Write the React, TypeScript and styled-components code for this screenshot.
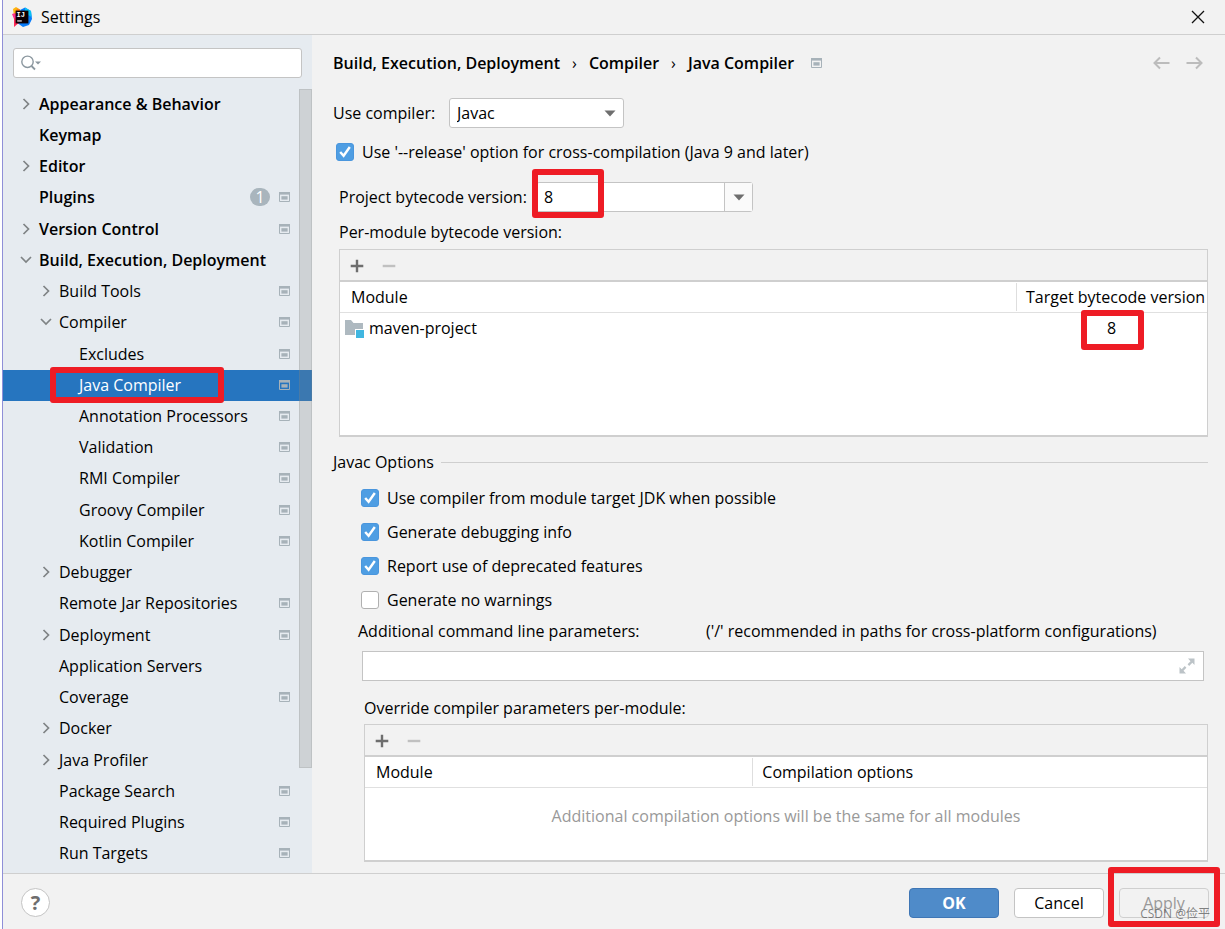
import React from "react";
import styled, { createGlobalStyle, css } from "styled-components";

const GlobalStyle = createGlobalStyle`
  *, *::before, *::after { box-sizing: border-box; }
  body {
    margin: 0;
    background: #f2f2f2;
    color: #000;
    font: 16px/24px "Open Sans", "Noto Sans CJK SC", sans-serif;
  }
  input, select, button { font: inherit; color: inherit; margin: 0; }
`;

const BORDER = "#cfcfcf";
const RED = "#ee1c25";

/* Red pen rectangle laid over the element that it marks */
const marked = css<{ $inset: string }>`
  position: relative;
  &::after {
    content: "";
    position: absolute;
    inset: ${(p) => p.$inset};
    border: 6px solid ${RED};
    border-radius: 3px;
    pointer-events: none;
    z-index: 2;
  }
`;

const Dialog = styled.div`
  display: grid;
  grid-template-rows: 35px 1fr 56px;
  min-height: 100vh;
  border-left: 1px solid #8f8fd8;
  margin-left: 2px;
  box-shadow: -2px 0 0 #fff;
`;

const TitleBar = styled.header`
  display: flex;
  align-items: center;
  gap: 9px;
  padding: 0 20px 0 9px;
  border-bottom: 1px solid ${BORDER};
`;

const Title = styled.h1`
  flex: 1;
  margin: 0;
  font-size: 16px;
  font-weight: 400;
`;

const IconButton = styled.button`
  display: flex;
  align-items: center;
  justify-content: center;
  padding: 0;
  border: 0;
  background: none;
`;

const Body = styled.div`
  display: grid;
  grid-template-columns: 309px minmax(0, 1fr);
`;

const Sidebar = styled.aside`
  display: flex;
  flex-direction: column;
  gap: 11px;
  padding: 13px 0 3px;
  background: #e6ebf0;
`;

const SearchBox = styled.label`
  display: flex;
  align-items: center;
  gap: 4px;
  height: 30px;
  margin: 0 10px;
  padding: 0 7px;
  border: 1px solid #c4c4c4;
  border-radius: 3px;
  background: #fff;
`;

const BareInput = styled.input`
  flex: 1;
  min-width: 0;
  padding: 0;
  border: 0;
  outline: 0;
  background: none;
`;

const Tree = styled.ul`
  position: relative;
  flex: 1;
  display: grid;
  grid-auto-rows: 1fr;
  margin: 0;
  padding: 0;
  list-style: none;
`;

const TreeRow = styled.li<{ $level: number; $selected?: boolean }>`
  display: flex;
  align-items: center;
  padding: 0 22px 2px ${(p) => 16 + p.$level * 20}px;
  font-weight: ${(p) => (p.$level === 0 ? 600 : 400)};
  ${(p) => p.$selected && css`
    background: #2675bf;
    color: #fff;
  `}
`;

const TreeToggle = styled.span`
  display: flex;
  align-items: center;
  justify-content: center;
  width: 14px;
  margin-right: 6px;
`;

const TreeLabel = styled.span<{ $inset?: string }>`
  ${(p) => p.$inset && marked}
`;

const TreeEnd = styled.span`
  display: flex;
  align-items: center;
  gap: 9px;
  margin-left: auto;
`;

const CountBadge = styled.span`
  width: 20px;
  height: 18px;
  border-radius: 9px;
  background: #a9b5bd;
  color: #fff;
  font-size: 16px;
  font-weight: 400;
  line-height: 18px;
  text-align: center;
`;

const Scrollbar = styled.li`
  position: absolute;
  top: 0;
  right: 0;
  width: 13px;
  height: 87%;
  border: 1px solid rgba(130, 130, 130, 0.2);
  background: rgba(130, 130, 130, 0.24);
`;

const Main = styled.main`
  display: flex;
  flex-direction: column;
  padding: 16px 17px 11px 21px;
`;

const Breadcrumb = styled.nav`
  display: flex;
  align-items: center;
  gap: 12px;
  font-weight: 600;
`;

const Separator = styled.span`
  font-weight: 400;
`;

const BreadcrumbMark = styled.span`
  display: flex;
  margin-left: 5px;
`;

const BreadcrumbEnd = styled.span`
  display: flex;
  gap: 16px;
  margin-left: auto;
  margin-right: 5px;
`;

const Row = styled.div<{ $top: number; $left?: number }>`
  display: flex;
  align-items: center;
  margin-top: ${(p) => p.$top}px;
  padding-left: ${(p) => p.$left ?? 0}px;
`;

const FieldLabel = styled.label<{ $width: number }>`
  width: ${(p) => p.$width}px;
`;

const SelectWrap = styled.div`
  position: relative;
  width: 175px;
`;

const Select = styled.select`
  appearance: none;
  display: block;
  width: 100%;
  height: 30px;
  padding: 0 30px 0 7px;
  border: 1px solid #c4c4c4;
  border-radius: 3px;
  background: #fff;
  outline: 0;
`;

const SelectArrow = styled.span`
  position: absolute;
  top: 12px;
  right: 8px;
  display: flex;
  pointer-events: none;
`;

const CheckLabel = styled.label`
  display: flex;
  align-items: center;
  gap: 8px;
`;

const CheckBoxFrame = styled.span`
  display: grid;
  width: 18px;
  height: 18px;
  svg, input { grid-area: 1 / 1; }
  svg { pointer-events: none; z-index: 1; }
  input:not(:checked) + svg { display: none; }
`;

const CheckInput = styled.input`
  appearance: none;
  width: 18px;
  height: 18px;
  border: 1px solid #b0b0b0;
  border-radius: 3px;
  background: #fff;
  &:checked {
    border-color: #4a96dd;
    background: #4f9ee3;
  }
`;

const ComboBox = styled.div<{ $inset: string }>`
  ${marked}
  display: flex;
  width: 217px;
  height: 30px;
  border: 1px solid #c4c4c4;
  border-radius: 3px;
  background: #fff;
  input { padding-left: 7px; }
`;

const ComboButton = styled(IconButton)`
  width: 28px;
  border-left: 1px solid #c4c4c4;
  background: #fafafa;
`;

const Panel = styled.section<{ $left: number; $top: number; $height: number }>`
  display: flex;
  flex-direction: column;
  min-height: ${(p) => p.$height}px;
  margin-top: ${(p) => p.$top}px;
  margin-left: ${(p) => p.$left}px;
  border: 1px solid ${BORDER};
  border-bottom-width: 2px;
  background: #fff;
`;

const PanelToolbar = styled.div`
  display: flex;
  align-items: center;
  gap: 18px;
  height: 32px;
  padding: 2px 0 0 10px;
  border-bottom: 2px solid ${BORDER};
  background: #f2f2f2;
`;

const Table = styled.table`
  width: 100%;
  table-layout: fixed;
  border-collapse: separate;
  border-spacing: 0;
`;

const HeadCell = styled.th<{ $width?: string }>`
  width: ${(p) => p.$width ?? "auto"};
  height: 31px;
  padding: 0;
  border-bottom: 1px solid #e0e0e0;
  font-weight: 400;
  text-align: left;
  white-space: nowrap;
`;

const HeadText = styled.span<{ $split?: boolean }>`
  display: block;
  padding-left: ${(p) => (p.$split ? 9 : 11)}px;
  border-left: ${(p) => (p.$split ? "1px solid #dedede" : "0")};
  line-height: 28px;
`;

const DataCell = styled.td<{ $center?: boolean }>`
  height: 30px;
  padding: 0 4px;
  text-align: ${(p) => (p.$center ? "center" : "left")};
`;

const ModuleName = styled.span`
  display: flex;
  align-items: center;
  gap: 5px;
`;

const MarkedValue = styled.span<{ $inset: string }>`
  ${marked}
  display: inline-block;
`;

const EmptyNote = styled.p`
  margin: 16px 0 0;
  color: #999;
  text-align: center;
`;

const GroupTitle = styled.h2`
  display: flex;
  align-items: center;
  gap: 7px;
  margin: 13px 0 0;
  font-size: 16px;
  font-weight: 400;
  &::after {
    content: "";
    flex: 1;
    height: 1px;
    background: ${BORDER};
  }
`;

const CheckList = styled.div`
  display: flex;
  flex-direction: column;
  gap: 10px;
  margin: 12px 0 0 28px;
`;

const ExpandField = styled.div`
  display: flex;
  align-items: center;
  height: 30px;
  margin: 8px 4px 0 29px;
  padding: 0 8px;
  border: 1px solid #c4c4c4;
  background: #fff;
`;

const Footer = styled.footer`
  display: flex;
  align-items: center;
  gap: 15px;
  padding: 2px 16px 0 18px;
  border-top: 1px solid ${BORDER};
`;

const HelpButton = styled.button`
  width: 29px;
  height: 29px;
  margin-right: auto;
  padding: 0;
  border: 1px solid #c4c4c4;
  border-radius: 50%;
  background: #fff;
  color: #6e6e6e;
  font-size: 20px;
  font-weight: 700;
  line-height: 27px;
`;

const Button = styled.button<{ $primary?: boolean }>`
  display: block;
  width: 90px;
  height: 30px;
  padding: 0;
  border: 1px solid ${(p) => (p.$primary ? "#3f76b5" : "#c4c4c4")};
  border-radius: 4px;
  background: ${(p) => (p.$primary ? "#4f8bc9" : "#fff")};
  color: ${(p) => (p.$primary ? "#fff" : "#000")};
  font-weight: ${(p) => (p.$primary ? 700 : 400)};
  &:disabled {
    background: #f2f2f2;
    border-color: ${BORDER};
    color: #999;
  }
`;

const ApplyWrap = styled.div<{ $inset: string }>`
  ${marked}
`;

const Watermark = styled.span`
  position: absolute;
  right: -1px;
  bottom: -4px;
  color: rgba(90, 90, 90, 0.75);
  font-size: 12px;
  line-height: 16px;
  white-space: nowrap;
`;

const Logo = () => (
  <svg width="20" height="20" viewBox="0 0 20 20" aria-hidden="true">
    <path d="M1 2 4 0 8 2.5 6 9 2 9Z" fill="#fdb60d" />
    <path d="M0 7 5 5.5 6 13 2 12Z" fill="#ff318c" />
    <path d="M2 11 8 12 9 17 5.5 17 2 20Z" fill="#fe2857" />
    <path d="M5 1.5 8 2.5 7 6 3 7Z" fill="#fc801d" />
    <path d="M8 3 13 0.5 19 4 20 12 17 18 11 20 6 16.5 13 10Z" fill="#087cfa" />
    <path d="M13 0.5 19 4 19.5 10 13 6Z" fill="#07c3f2" />
    <rect x="3.6" y="3.6" width="12.8" height="12.8" fill="#0a0005" />
    <text x="4.6" y="10" fill="#fff" fontSize="7" fontWeight="700" fontFamily="Liberation Mono, monospace">IJ</text>
    <rect x="5.2" y="13.4" width="4.6" height="1.1" fill="#fff" />
  </svg>
);

const CloseIcon = () => (
  <svg width="14" height="14" viewBox="0 0 14 14" stroke="#111" strokeWidth="1.3" aria-hidden="true">
    <path d="M1 1 13 13M13 1 1 13" />
  </svg>
);

const SearchIcon = () => (
  <svg width="20" height="16" viewBox="0 0 20 16" fill="none" aria-hidden="true">
    <circle cx="6.5" cy="6.8" r="5.7" stroke="#8b979f" strokeWidth="1.4" />
    <path d="M10.5 11 14 14.5" stroke="#8b979f" strokeWidth="1.8" />
    <path d="M14 6.4H20L17 9.6Z" fill="#8b979f" />
  </svg>
);

const Chevron = ({ open }: { open: boolean }) => (
  <svg width="12" height="12" viewBox="0 0 12 12" fill="none" stroke="#7f8385" strokeWidth="1.7" aria-hidden="true">
    <path d={open ? "M1 3 6 8 11 3" : "M3.5 1 8.5 6 3.5 11"} />
  </svg>
);

const ProjectIcon = () => (
  <svg width="11" height="10" viewBox="0 0 11 10" aria-hidden="true">
    <path d="M0.5 1V9.5H10.5V1" fill="none" stroke="#a7b2b9" />
    <rect width="11" height="2.6" fill="#a7b2b9" />
    <rect x="2.4" y="4.2" width="6.2" height="3.4" fill="#a7b2b9" />
  </svg>
);

const ArrowIcon = ({ right }: { right?: boolean }) => (
  <svg width="17" height="14" viewBox="0 0 17 14" fill="none" stroke="#bcbcbc" strokeWidth="2" aria-hidden="true">
    <path d={right ? "M0.5 7H15.5M10 1.5 15.5 7 10 12.5" : "M16.5 7H1.5M7 1.5 1.5 7 7 12.5"} />
  </svg>
);

const DownTriangle = () => (
  <svg width="12" height="7" viewBox="0 0 12 7" aria-hidden="true">
    <path d="M0.5 0.5H11.5L6 6.5Z" fill="#6e6e6e" />
  </svg>
);

const CheckMark = () => (
  <svg width="18" height="18" viewBox="0 0 18 18" fill="none" stroke="#fff" strokeWidth="2.4" aria-hidden="true">
    <path d="M4.2 9 7.6 12.8 13.8 4" />
  </svg>
);

const PlusIcon = () => (
  <svg width="14" height="14" viewBox="0 0 14 14" stroke="#6e6e6e" strokeWidth="2.4" aria-hidden="true">
    <path d="M7 0.7V13.3M0.7 7H13.3" />
  </svg>
);

const MinusIcon = () => (
  <svg width="14" height="14" viewBox="0 0 14 14" stroke="#c0c0c0" strokeWidth="2.4" aria-hidden="true">
    <path d="M0.7 7H13.3" />
  </svg>
);

const ModuleIcon = () => (
  <svg width="20" height="19" viewBox="0 0 20 19" aria-hidden="true">
    <path d="M1 1H7L9.5 4H19V10H11V16H1Z" fill="#aeb9c0" />
    <rect x="12" y="11" width="8" height="8" fill="#40b6e0" />
  </svg>
);

const ExpandIcon = () => (
  <svg width="16" height="16" viewBox="0 0 16 16" fill="#bcc3c7" aria-hidden="true">
    <path d="M9 0.5H15.5V7L13.3 4.8 10.2 7.9 8.6 6.3 11.5 3.2Z" />
    <path d="M7 15.5H0.5V9L2.7 11.2 5.8 8.1 7.4 9.7 4.5 12.8Z" />
  </svg>
);

type Item = {
  label: string;
  level: number;
  open?: boolean;
  project?: boolean;
  count?: number;
  selected?: boolean;
};

const items: Item[] = [
  { label: "Appearance & Behavior", level: 0, open: false },
  { label: "Keymap", level: 0 },
  { label: "Editor", level: 0, open: false },
  { label: "Plugins", level: 0, project: true, count: 1 },
  { label: "Version Control", level: 0, open: false, project: true },
  { label: "Build, Execution, Deployment", level: 0, open: true },
  { label: "Build Tools", level: 1, open: false, project: true },
  { label: "Compiler", level: 1, open: true, project: true },
  { label: "Excludes", level: 2, project: true },
  { label: "Java Compiler", level: 2, project: true, selected: true },
  { label: "Annotation Processors", level: 2, project: true },
  { label: "Validation", level: 2, project: true },
  { label: "RMI Compiler", level: 2, project: true },
  { label: "Groovy Compiler", level: 2, project: true },
  { label: "Kotlin Compiler", level: 2, project: true },
  { label: "Debugger", level: 1, open: false },
  { label: "Remote Jar Repositories", level: 1, project: true },
  { label: "Deployment", level: 1, open: false, project: true },
  { label: "Application Servers", level: 1 },
  { label: "Coverage", level: 1, project: true },
  { label: "Docker", level: 1, open: false },
  { label: "Java Profiler", level: 1, open: false },
  { label: "Package Search", level: 1, project: true },
  { label: "Required Plugins", level: 1, project: true },
  { label: "Run Targets", level: 1, project: true },
];

const Check = ({ label, checked }: { label: string; checked: boolean }) => (
  <CheckLabel>
    <CheckBoxFrame>
      <CheckInput type="checkbox" defaultChecked={checked} />
      <CheckMark />
    </CheckBoxFrame>
    {label}
  </CheckLabel>
);

const EditToolbar = () => (
  <PanelToolbar>
    <IconButton aria-label="Add"><PlusIcon /></IconButton>
    <IconButton aria-label="Remove" disabled><MinusIcon /></IconButton>
  </PanelToolbar>
);

export default function App() {
  return (
    <>
      <GlobalStyle />
      <Dialog>
        <TitleBar>
          <Logo />
          <Title>Settings</Title>
          <IconButton aria-label="Close"><CloseIcon /></IconButton>
        </TitleBar>
        <Body>
          <Sidebar>
            <SearchBox>
              <SearchIcon />
              <BareInput type="text" aria-label="Search settings" />
            </SearchBox>
            <Tree>
              {items.map((item) => (
                <TreeRow key={item.label} $level={item.level} $selected={item.selected}>
                  <TreeToggle>
                    {item.open !== undefined && <Chevron open={item.open} />}
                  </TreeToggle>
                  <TreeLabel $inset={item.selected ? "-6px -43px -6px -29px" : undefined}>
                    {item.label}
                  </TreeLabel>
                  <TreeEnd>
                    {item.count && <CountBadge>{item.count}</CountBadge>}
                    {item.project && <ProjectIcon />}
                  </TreeEnd>
                </TreeRow>
              ))}
              <Scrollbar aria-hidden="true" />
            </Tree>
          </Sidebar>
          <Main>
            <Breadcrumb aria-label="Breadcrumb">
              <span>Build, Execution, Deployment</span>
              <Separator>›</Separator>
              <span>Compiler</span>
              <Separator>›</Separator>
              <span>Java Compiler</span>
              <BreadcrumbMark><ProjectIcon /></BreadcrumbMark>
              <BreadcrumbEnd>
                <IconButton aria-label="Back" disabled><ArrowIcon /></IconButton>
                <IconButton aria-label="Forward" disabled><ArrowIcon right /></IconButton>
              </BreadcrumbEnd>
            </Breadcrumb>

            <Row $top={23}>
              <FieldLabel $width={116} htmlFor="compiler">Use compiler:</FieldLabel>
              <SelectWrap>
                <Select id="compiler" defaultValue="Javac">
                  <option>Javac</option>
                  <option>Eclipse</option>
                </Select>
                <SelectArrow><DownTriangle /></SelectArrow>
              </SelectWrap>
            </Row>
            <Row $top={12} $left={3}>
              <Check label="Use '--release' option for cross-compilation (Java 9 and later)" checked />
            </Row>
            <Row $top={18} $left={6}>
              <FieldLabel $width={197} htmlFor="bytecode">Project bytecode version:</FieldLabel>
              <ComboBox $inset="-14px 148px -7px -5px">
                <BareInput id="bytecode" type="text" defaultValue="8" />
                <ComboButton aria-label="Show versions"><DownTriangle /></ComboButton>
              </ComboBox>
            </Row>
            <Row $top={8} $left={6}>Per-module bytecode version:</Row>
            <Panel $left={6} $top={5} $height={188}>
              <EditToolbar />
              <Table>
                <thead>
                  <tr>
                    <HeadCell><HeadText>Module</HeadText></HeadCell>
                    <HeadCell $width="191px"><HeadText $split>Target bytecode version</HeadText></HeadCell>
                  </tr>
                </thead>
                <tbody>
                  <tr>
                    <DataCell><ModuleName><ModuleIcon />maven-project</ModuleName></DataCell>
                    <DataCell $center><MarkedValue $inset="-6px -28px -10px -26px">8</MarkedValue></DataCell>
                  </tr>
                </tbody>
              </Table>
            </Panel>

            <GroupTitle>Javac Options</GroupTitle>
            <CheckList>
              <Check label="Use compiler from module target JDK when possible" checked />
              <Check label="Generate debugging info" checked />
              <Check label="Report use of deprecated features" checked />
              <Check label="Generate no warnings" checked={false} />
            </CheckList>
            <Row $top={7} $left={25}>
              <FieldLabel $width={348} htmlFor="params">Additional command line parameters:</FieldLabel>
              <span>('/' recommended in paths for cross-platform configurations)</span>
            </Row>
            <ExpandField>
              <BareInput id="params" type="text" />
              <IconButton aria-label="Expand"><ExpandIcon /></IconButton>
            </ExpandField>
            <Row $top={15} $left={31}>Override compiler parameters per-module:</Row>
            <Panel $left={31} $top={4} $height={138}>
              <EditToolbar />
              <Table>
                <thead>
                  <tr>
                    <HeadCell $width="46%"><HeadText>Module</HeadText></HeadCell>
                    <HeadCell><HeadText $split>Compilation options</HeadText></HeadCell>
                  </tr>
                </thead>
              </Table>
              <EmptyNote>Additional compilation options will be the same for all modules</EmptyNote>
            </Panel>
          </Main>
        </Body>
        <Footer>
          <HelpButton aria-label="Help">?</HelpButton>
          <Button $primary>OK</Button>
          <Button>Cancel</Button>
          <ApplyWrap $inset="-21px -11px -9px -11px">
            <Button disabled>Apply</Button>
            <Watermark>CSDN @俭平</Watermark>
          </ApplyWrap>
        </Footer>
      </Dialog>
    </>
  );
}
